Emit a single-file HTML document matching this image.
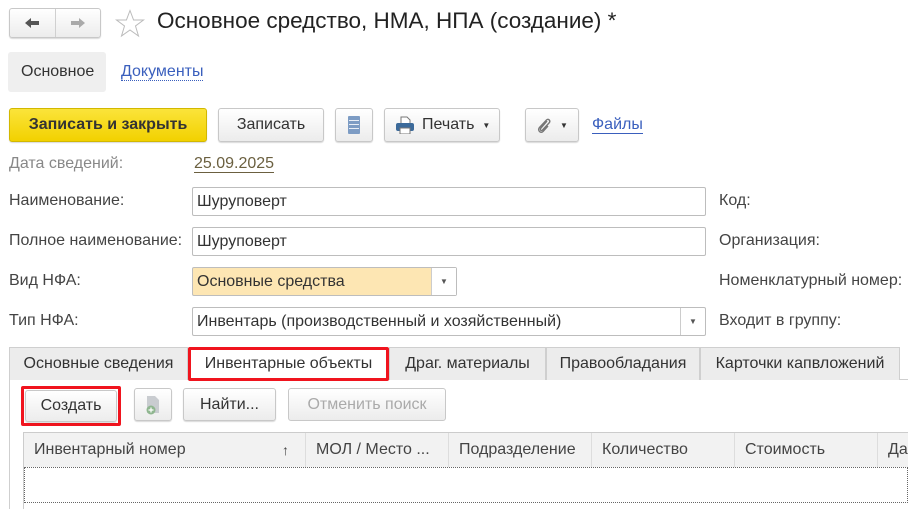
<!DOCTYPE html>
<html><head><meta charset="utf-8">
<style>
*{box-sizing:border-box;margin:0;padding:0}
body{width:908px;height:509px;overflow:hidden;background:#fff;font-family:"Liberation Sans",Arial,sans-serif;font-size:16px;color:#333;position:relative}
.a{position:absolute;white-space:nowrap}
.btn{position:absolute;border:1px solid #c8c8c8;border-radius:3px;background:linear-gradient(#fff,#ececec);box-shadow:0 1px 1px rgba(0,0,0,.15);display:flex;align-items:center;justify-content:center;color:#333;white-space:nowrap}
.lbl{position:absolute;left:9px;color:#444;white-space:nowrap}
.rl{position:absolute;left:719px;color:#444;white-space:nowrap}
.inp{position:absolute;border:1px solid #bdbdbd;border-radius:2px;background:#fff;padding-left:4px;display:flex;align-items:center;color:#333;white-space:nowrap}
.dd{position:absolute;top:0;bottom:0;width:25px;border-left:1px solid #ccc;display:flex;align-items:center;justify-content:center;font-size:8px;color:#555}
.tab{position:absolute;top:347px;height:33px;background:#ececec;border:1px solid #cfcfcf;border-bottom:none;display:flex;align-items:center;justify-content:center;color:#333;white-space:nowrap}
.th{position:absolute;top:433px;height:34px;border-right:1px solid #ddd;display:flex;align-items:center;padding-left:10px;color:#444;white-space:nowrap;overflow:hidden}
</style></head><body>
<div class="btn" style="left:9px;top:8px;width:92px;height:30px;justify-content:flex-start">
 <div style="width:46px;height:28px;border-right:1px solid #d0d0d0;display:flex;align-items:center;justify-content:center">
 <svg width="16" height="12"><path d="M1 6L7 1V4H15V8H7V11Z" fill="#555"/></svg></div>
 <div style="width:45px;display:flex;align-items:center;justify-content:center">
 <svg width="16" height="12"><path d="M15 6L9 1V4H1V8H9V11Z" fill="#aaa"/></svg></div>
</div>
<svg class="a" style="left:115px;top:9px" width="30" height="29"><path d="M15 1.5L18.6 11H28.5L20.5 17L23.5 27L15 21L6.5 27L9.5 17L1.5 11H11.4Z" fill="none" stroke="#bbb" stroke-width="1"/></svg>
<div class="a" style="left:157px;top:8px;font-size:22.5px;color:#222">Основное средство, НМА, НПА (создание) *</div>

<div class="a" style="left:8px;top:52px;width:98px;height:40px;background:#efefef;border-radius:3px"></div>
<div class="a" style="left:21px;top:63px;color:#333">Основное</div>
<div class="a" style="left:121px;top:63px;color:#3a5fbd;border-bottom:1px dotted #3a5fbd;line-height:17px">Документы</div>

<div class="btn" style="left:9px;top:108px;width:198px;height:34px;background:linear-gradient(#fbe43a,#f2d100);border-color:#d2b800;font-weight:bold;color:#333">Записать и закрыть</div>
<div class="btn" style="left:218px;top:108px;width:106px;height:34px">Записать</div>
<div class="btn" style="left:335px;top:108px;width:38px;height:34px">
 <svg width="14" height="20"><rect x="1" y="1" width="12" height="18" rx="1" fill="#7d9cc4"/><g stroke="#e8eef6" stroke-width="1"><line x1="2" y1="5.5" x2="12" y2="5.5"/><line x1="2" y1="9.5" x2="12" y2="9.5"/><line x1="2" y1="13.5" x2="12" y2="13.5"/></g></svg></div>
<div class="btn" style="left:384px;top:108px;width:116px;height:34px;justify-content:flex-start;padding-left:10px">
 <svg width="20" height="18"><path d="M6 1H12L15 4V8H6Z" fill="#fff" stroke="#777"/><rect x="1" y="7" width="18" height="8" rx="2" fill="#3c6a9a"/><rect x="5" y="12" width="10" height="6" fill="#fff" stroke="#777"/></svg>
 <span style="margin-left:7px">Печать</span><span style="font-size:8px;margin-left:8px">▼</span></div>
<div class="btn" style="left:525px;top:108px;width:54px;height:34px">
 <svg width="16" height="18"><path d="M11 5L5 12C3.5 13.5 5 15.5 6.5 14L13 7C15 5 12.5 2 10.5 4L3.5 11.5C1 14 4.5 18 7 15.5L12 10" fill="none" stroke="#777" stroke-width="1.4"/></svg>
 <span style="font-size:8px;margin-left:8px">▼</span></div>
<div class="a" style="left:592px;top:116px;color:#3a5fbd;border-bottom:1px solid #3a5fbd;line-height:17px">Файлы</div>

<div class="lbl" style="top:155px;color:#888">Дата сведений:</div>
<div class="a" style="left:194px;top:155px;color:#6b6040;border-bottom:1px solid #6b6040;line-height:17px">25.09.2025</div>
<div class="lbl" style="top:192px">Наименование:</div>
<div class="inp" style="left:192px;top:187px;width:514px;height:29px">Шуруповерт</div>
<div class="rl" style="top:192px">Код:</div>
<div class="lbl" style="top:232px">Полное наименование:</div>
<div class="inp" style="left:192px;top:227px;width:514px;height:29px">Шуруповерт</div>
<div class="rl" style="top:232px">Организация:</div>
<div class="lbl" style="top:272px">Вид НФА:</div>
<div class="inp" style="left:192px;top:267px;width:265px;height:29px;background:#fde6b3">Основные средства<div class="dd" style="right:0;background:#fff">▼</div></div>
<div class="rl" style="top:272px">Номенклатурный номер:</div>
<div class="lbl" style="top:312px">Тип НФА:</div>
<div class="inp" style="left:192px;top:307px;width:514px;height:29px">Инвентарь (производственный и хозяйственный)<div class="dd" style="right:0">▼</div></div>
<div class="rl" style="top:312px">Входит в группу:</div>

<div class="a" style="left:9px;top:379px;width:899px;height:1px;background:#cfcfcf"></div>
<div class="a" style="left:9px;top:379px;width:1px;height:130px;background:#cfcfcf"></div>
<div class="tab" style="left:9px;width:179px">Основные сведения</div>
<div class="tab" style="left:188px;width:201px;background:#fff;height:34px;border:3px solid #f0141e;border-radius:2px">Инвентарные объекты</div>
<div class="tab" style="left:389px;width:157px">Драг. материалы</div>
<div class="tab" style="left:546px;width:154px">Правообладания</div>
<div class="tab" style="left:700px;width:200px">Карточки капвложений</div>

<div class="a" style="left:21px;top:386px;width:100px;height:40px;border:3px solid #f0141e;border-radius:2px"></div>
<div class="btn" style="left:25px;top:390px;width:92px;height:32px">Создать</div>
<div class="btn" style="left:134px;top:388px;width:38px;height:33px">
 <svg width="16" height="20"><path d="M2 1H10L14 5V18H2Z" fill="#c9ccd0"/><circle cx="6" cy="15" r="4.5" fill="#8fb68f"/><path d="M6 12.5V17.5M3.5 15H8.5" stroke="#fff" stroke-width="1.2"/></svg></div>
<div class="btn" style="left:183px;top:388px;width:93px;height:33px">Найти...</div>
<div class="btn" style="left:288px;top:388px;width:158px;height:33px;color:#aaa;box-shadow:none">Отменить поиск</div>

<div class="a" style="left:23px;top:432px;width:885px;height:77px;border-top:1px solid #ccc;border-left:1px solid #ccc"></div>
<div class="a" style="left:24px;top:433px;width:884px;height:34px;background:#f2f2f2"></div>
<div class="th" style="left:24px;width:282px">Инвентарный номер<span style="position:absolute;right:16px;font-size:14px">↑</span></div>
<div class="th" style="left:306px;width:143px">МОЛ / Место ...</div>
<div class="th" style="left:449px;width:143px">Подразделение</div>
<div class="th" style="left:592px;width:143px">Количество</div>
<div class="th" style="left:735px;width:143px">Стоимость</div>
<div class="th" style="left:878px;width:60px">Да</div>
<div class="a" style="left:24px;top:467px;width:884px;height:36px;border:1px dotted #666"></div>
</body></html>
